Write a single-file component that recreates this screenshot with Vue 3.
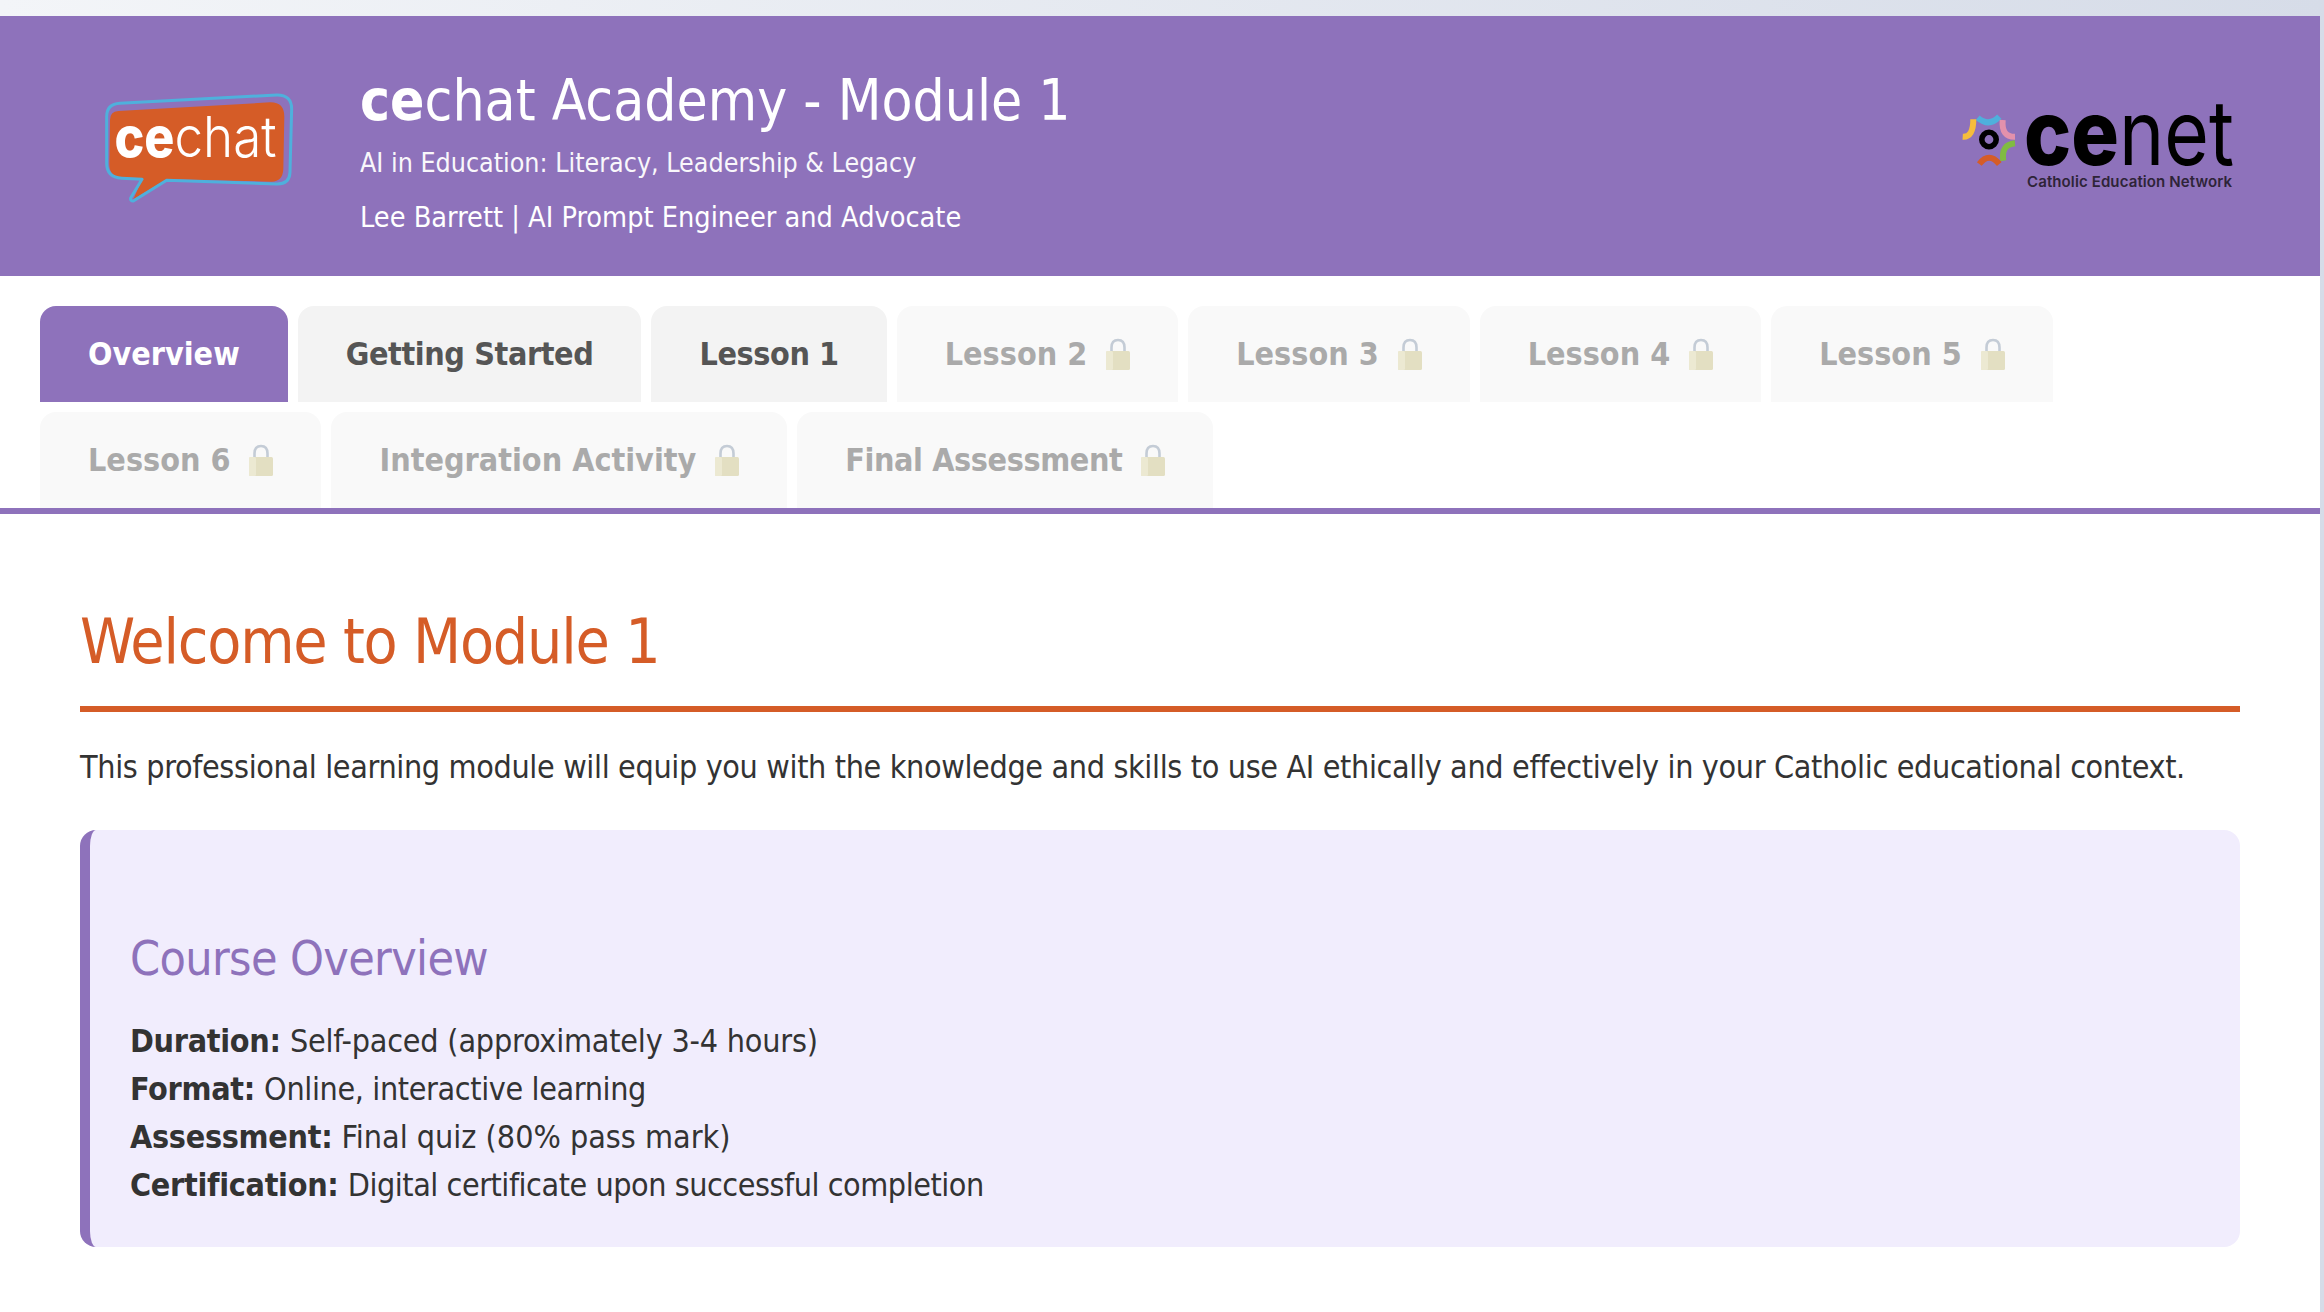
<script setup>
const tabs = [
  { label: 'Overview', state: 'active' },
  { label: 'Getting Started', state: 'open', tight: true },
  { label: 'Lesson 1', state: 'open', tight: true },
  { label: 'Lesson 2', state: 'locked' },
  { label: 'Lesson 3', state: 'locked' },
  { label: 'Lesson 4', state: 'locked' },
  { label: 'Lesson 5', state: 'locked' },
  { label: 'Lesson 6', state: 'locked' },
  { label: 'Integration Activity', state: 'locked' },
  { label: 'Final Assessment', state: 'locked', tight: true },
]

// track: per-line letter spacing of the value text, in px
const overview = [
  { key: 'Duration:', value: 'Self-paced (approximately 3-4 hours)', track: -0.2 },
  { key: 'Format:', value: 'Online, interactive learning', track: -0.37 },
  { key: 'Assessment:', value: 'Final quiz (80% pass mark)', track: 0 },
  { key: 'Certification:', value: 'Digital certificate upon successful completion', track: -0.46 },
]
</script>

<template>
  <div class="window">
    <div class="page">
      <header class="header">
        <div class="brand">
          <svg class="logo-chat" viewBox="0 0 200 120" width="200" height="120">
            <g transform="scale(0.3333) translate(-90 -48)">
              <path class="bubble-fill" d="M145 123 L600 97 Q643 96 643 140 L640 298 Q638 335 605 335 L290 328 L190 388 L218 325 L155 322 Q118 320 118 282 L120 150 Q120 125 145 123 Z" />
              <path class="bubble-line" d="M150 100 L620 75 Q665 74 665 118 L660 308 Q658 343 620 342 L290 331 L190 393 Q180 393 182 384 L216 328 L155 325 Q110 322 110 280 L110 140 Q110 102 150 100 Z" />
            </g>
            <text x="14.5" y="71.3" class="chat-word chat-bold" textLength="60" lengthAdjust="spacingAndGlyphs">ce</text>
            <text x="74.5" y="71.3" class="chat-word" textLength="102" lengthAdjust="spacingAndGlyphs">chat</text>
          </svg>
          <div class="titles">
            <h1><b>ce</b>chat Academy - Module 1</h1>
            <p class="subtitle">AI in Education: Literacy, Leadership &amp; Legacy</p>
            <p class="author">Lee Barrett | AI Prompt Engineer and Advocate</p>
          </div>
        </div>
        <svg class="logo-cenet" viewBox="0 -30 290 160" width="290" height="160">
          <g class="arcs">
            <path stroke="#4fb0dc" d="M27.7 21.7 Q39 31.4 49.3 20.7" />
            <path stroke="#f6bd3c" d="M23.3 23.3 Q23.4 41.4 12.7 40.7" />
            <path stroke="#e391ac" d="M52.7 24 Q51.2 41 65 40.7" />
            <path stroke="#80bb42" d="M65 47.3 Q50.8 48.6 53.3 64.7" />
            <path stroke="#d55c27" d="M29.3 68 Q39 55.4 49.3 68" />
          </g>
          <circle cx="39" cy="43.5" r="7.2" fill="none" stroke="#000" stroke-width="5.6" />
          <text x="74" y="69" class="cenet-word cenet-bold" textLength="95" lengthAdjust="spacingAndGlyphs">ce</text>
          <text x="169" y="69" class="cenet-word" textLength="115" lengthAdjust="spacingAndGlyphs">net</text>
          <text x="77" y="91" class="cenet-sub" textLength="205" lengthAdjust="spacing">Catholic Education Network</text>
        </svg>
      </header>

      <nav class="tabs">
        <div v-for="tab in tabs" :key="tab.label" class="tab" :class="[tab.state, { tight: tab.tight }]">
          <span>{{ tab.label }}</span>
          <svg v-if="tab.state === 'locked'" class="lock" viewBox="0 0 24 32" width="24" height="32">
            <path d="M5.5 14 V9.5 Q5.5 2 12 2 Q18.5 2 18.5 9.5 V14" fill="none" stroke="#c4ccd6" stroke-width="2.6" />
            <rect x="0" y="13" width="24" height="19" rx="1.5" fill="#e3dfc2" />
            <rect x="0" y="13" width="7" height="19" rx="1.5" fill="#ece9d2" />
          </svg>
        </div>
      </nav>

      <main class="content">
        <h2>Welcome to Module 1</h2>
        <p class="intro">This professional learning module will equip you with the knowledge and skills to use AI ethically and effectively in your Catholic educational context.</p>
        <section class="card">
          <h3>Course Overview</h3>
          <p v-for="row in overview" :key="row.key">
            <strong>{{ row.key }}</strong> <span :style="{ letterSpacing: row.track + 'px' }">{{ row.value }}</span>
          </p>
        </section>
      </main>
    </div>
  </div>
</template>

<style scoped>
* {
  box-sizing: border-box;
  margin: 0;
  padding: 0;
}

.window {
  padding: 16px 4px 0 0;
  min-height: 1312px;
  background: linear-gradient(90deg, #f3f5f8 0%, #d6dce8 100%);
  font-family: Tahoma, 'DejaVu Sans', sans-serif;
  font-stretch: condensed;
  color: #333;
}

.page {
  background: #fff;
  min-height: 1296px;
}

/* HEADER */
.header {
  height: 260px;
  background: #8e72bb;
  color: #fff;
  display: flex;
  align-items: center;
  justify-content: space-between;
  padding: 0 80px 0 100px;
}

.brand {
  display: flex;
  align-items: center;
  gap: 60px;
}

.bubble-fill {
  fill: #d55c27;
}

.bubble-line {
  fill: none;
  stroke: #4fb0dc;
  stroke-width: 9;
  stroke-linejoin: round;
}

.chat-word {
  fill: #fff;
  font-family: Inter, sans-serif;
  font-stretch: normal;
  font-size: 56px;
  font-weight: 300;
}

.chat-bold {
  font-weight: 800;
}

.titles {
  margin-top: 12px;
}

.titles h1 {
  font-size: 56.4px;
  font-weight: 400;
  line-height: 68px;
  margin-bottom: 8px;
}

.subtitle {
  font-size: 26.6px;
  line-height: 40px;
  opacity: 0.95;
  margin-bottom: 14px;
}

.author {
  font-size: 28.6px;
  line-height: 40px;
}

.arcs path {
  fill: none;
  stroke-width: 6;
}

.cenet-word {
  font-family: Inter, sans-serif;
  font-stretch: normal;
  font-size: 90px;
  font-weight: 400;
  fill: #000;
}

.cenet-bold {
  font-weight: 800;
}

.cenet-sub {
  font-family: Inter, sans-serif;
  font-stretch: normal;
  font-size: 15px;
  font-weight: 600;
  fill: #2e2438;
}

/* TABS */
.tabs {
  display: flex;
  flex-wrap: wrap;
  gap: 10px;
  padding: 30px 40px 0;
  border-bottom: 6px solid #8e72bb;
}

.tab {
  height: 96px;
  padding: 0 48px;
  display: flex;
  align-items: center;
  gap: 19px;
  border-radius: 16px 16px 0 0;
  font-size: 32px;
  font-weight: 700;
}

.tab.tight {
  letter-spacing: -0.4px;
}

.tab.active {
  background: #8e72bb;
  color: #fff;
}

.tab.open {
  background: #f3f3f3;
  color: #555;
}

.tab.locked {
  background: #f9f9f9;
  color: #aaa;
}

/* CONTENT */
.content {
  padding: 90px 80px 0;
}

.content h2 {
  font-size: 62px;
  font-weight: 400;
  letter-spacing: -1.2px;
  color: #d55c27;
  line-height: 76px;
  padding-bottom: 26px;
  border-bottom: 6px solid #d55c27;
  margin-bottom: 31px;
}

.intro {
  font-size: 32px;
  line-height: 48px;
  letter-spacing: -0.35px;
  margin-bottom: 39px;
}

.card {
  background: #f1edfd;
  border-left: 10px solid #8e72bb;
  border-radius: 16px;
  padding: 100px 40px 40px;
  height: 417px;
}

.card h3 {
  font-size: 48px;
  font-weight: 400;
  letter-spacing: -0.65px;
  color: #8e72bb;
  line-height: 56px;
  margin-bottom: 31px;
}

.card p {
  font-size: 32px;
  line-height: 48px;
}

.card strong {
  letter-spacing: -0.3px;
}
</style>
